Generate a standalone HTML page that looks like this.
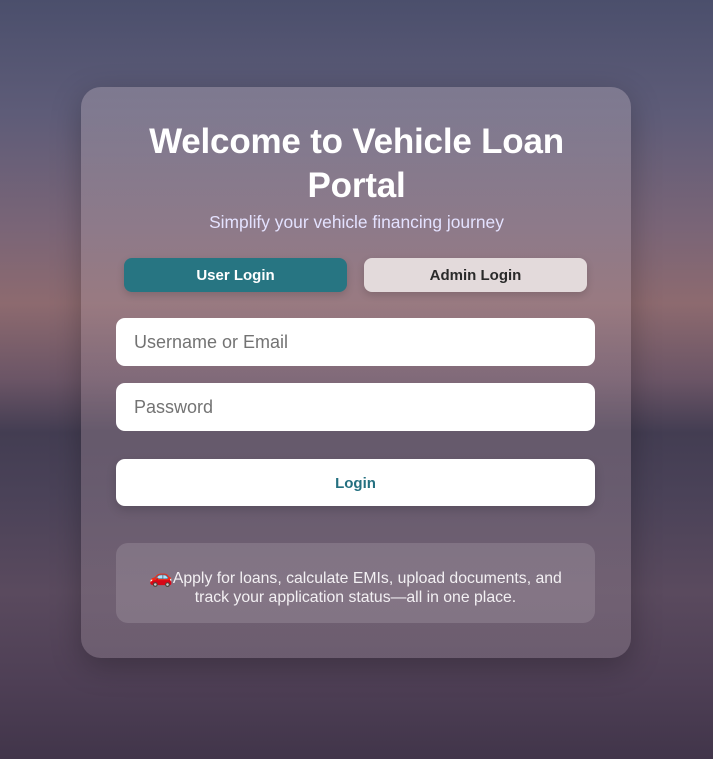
<!DOCTYPE html>
<html><head><meta charset="utf-8"><style>
html,body{margin:0;padding:0;width:713px;height:759px;overflow:hidden}
body{font-family:"Liberation Sans",Arial,sans-serif;position:relative;
background:linear-gradient(180deg,#4b4f6c 0%,#5e5c78 15%,#7a6577 30%,#8d6a6f 40%,#6b5566 50%,#433d52 57%,#4a4258 65%,#5a4a5e 78%,#4e3f55 90%,#41354a 100%);}
.card{position:absolute;left:81px;top:87px;width:550px;height:571px;border-radius:20px;
background:linear-gradient(180deg,rgba(170,160,175,.45) 0%,rgba(175,150,160,.35) 40%,rgba(150,130,145,.4) 70%,rgba(140,125,140,.45) 100%);
box-shadow:0 8px 30px rgba(0,0,0,.25)}
h1{position:absolute;left:0;right:0;top:120px;margin:0;text-align:center;color:#fff;font-size:35px;line-height:44px;font-weight:bold;letter-spacing:-0.2px}
.sub{position:absolute;left:0;right:0;top:212px;text-align:center;color:#e4e2ff;font-size:17.4px}
.tab{position:absolute;top:258px;height:34px;width:223px;border-radius:8px;text-align:center;line-height:36px;font-size:15px;font-weight:bold;box-shadow:0 3px 8px rgba(0,0,0,.15)}
.u{left:124px;background:#277582;color:#fff}
.a{left:364px;background:#e3dadb;color:#2a2a2a}
.in{position:absolute;left:116px;width:479px;height:48px;background:#fff;border-radius:9px;box-sizing:border-box;padding-left:18px;line-height:48px;font-size:18px;color:#737373}
.btn{position:absolute;left:116px;top:459px;width:479px;height:47px;background:#fff;border-radius:9px;text-align:center;line-height:50px;color:#247080;font-weight:bold;font-size:15px;box-shadow:0 4px 10px rgba(0,0,0,.15)}
.info{position:absolute;left:116px;top:543px;width:479px;height:80px;border-radius:12px;background:rgba(200,190,200,.22);color:#f3f0f3;font-size:15.8px;text-align:center;box-sizing:border-box;padding-top:25px;line-height:19px}
</style></head><body>
<div class="card"></div>
<h1>Welcome to Vehicle Loan<br>Portal</h1>
<div class="sub">Simplify your vehicle financing journey</div>
<div class="tab u">User Login</div>
<div class="tab a">Admin Login</div>
<div class="in" style="top:318px">Username or Email</div>
<div class="in" style="top:383px">Password</div>
<div class="btn">Login</div>
<div class="info"><span style="color:#d22;font-size:19px">🚗</span>Apply for loans, calculate EMIs, upload documents, and<br>track your application status—all in one place.</div>
</body></html>
